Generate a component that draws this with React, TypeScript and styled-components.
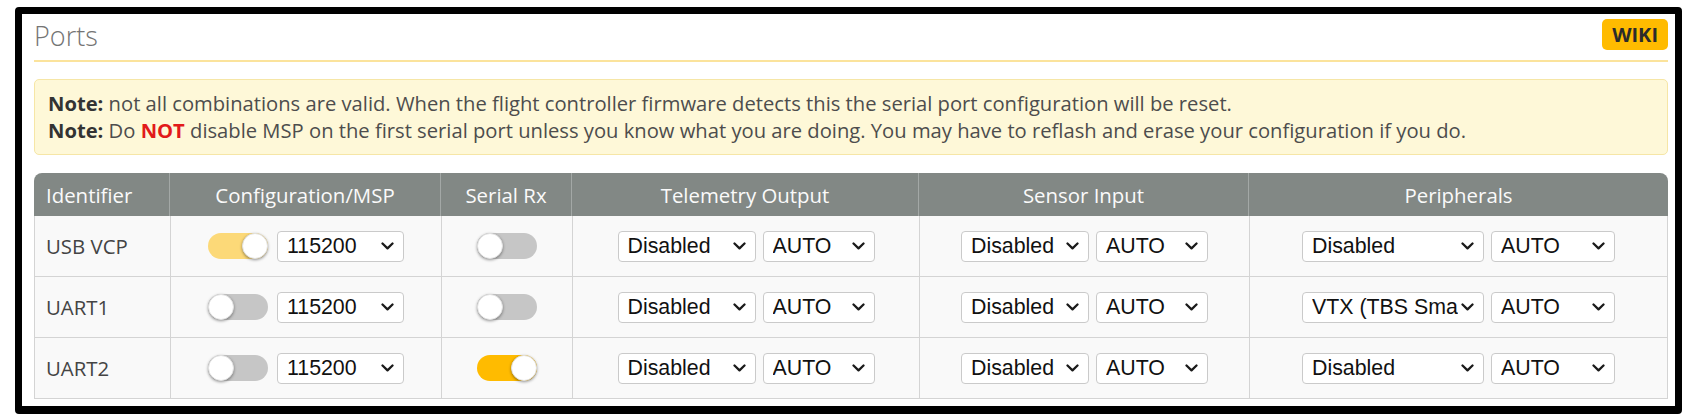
import React from 'react';
import styled, { createGlobalStyle } from 'styled-components';

type Port = {
  id: string;
  msp: boolean;
  mspMuted?: boolean;
  serialRx: boolean;
  peripheral: string;
};

const ports: Port[] = [
  { id: 'USB VCP', msp: true, mspMuted: true, serialRx: false, peripheral: 'Disabled' },
  { id: 'UART1', msp: false, serialRx: false, peripheral: 'VTX (TBS SmartAudio)' },
  { id: 'UART2', msp: false, serialRx: true, peripheral: 'Disabled' },
];

const COLS = '135px 271px 131px 347px 330px 1fr';

const GlobalStyle = createGlobalStyle`
  body {
    margin: 0;
    background: #fff;
    font-family: "Open Sans", "Liberation Sans", sans-serif;
  }
`;

const Frame = styled.div`
  margin: 7px 13px 0 15px;
  border: 7px solid #000;
  border-bottom-width: 8px;
  border-radius: 4px;
  padding: 5px 7px 7px 12px;
  background: #fff;
`;

const TitleBar = styled.div`
  display: flex;
  justify-content: space-between;
  align-items: flex-start;
  padding-bottom: 7px;
  border-bottom: 2px solid #fbe39c;
`;

const Title = styled.h1`
  margin: 0;
  font-size: 27px;
  line-height: 34px;
  font-weight: 300;
  color: #747474;
`;

const WikiButton = styled.a`
  display: flex;
  align-items: center;
  height: 31px;
  padding: 0 10px;
  border-radius: 5px;
  background: #ffbb00;
  color: #2b2b2b;
  font-size: 20px;
  font-weight: 700;
  text-decoration: none;
`;

const NoteBox = styled.div`
  margin-top: 17px;
  padding: 10px 13px;
  border: 1px solid #f6e6a6;
  border-radius: 5px;
  background: #fef8d8;
  color: #4d4d4d;
  font-size: 20.2px;
  line-height: 27px;
`;

const NoteLine = styled.p`
  margin: 0;
  white-space: nowrap;
`;

const Strong = styled.strong<{ $red?: boolean }>`
  font-weight: 700;
  color: ${(p) => (p.$red ? '#e21a1a' : '#333')};
`;

const Table = styled.div`
  margin-top: 18px;
`;

const HeadRow = styled.div`
  display: grid;
  grid-template-columns: ${COLS};
  height: 43px;
  background: #828885;
  border-radius: 8px 8px 0 0;
  color: #fafafa;
  font-size: 20.4px;
`;

const HeadCell = styled.div<{ $left?: boolean }>`
  display: flex;
  align-items: center;
  justify-content: ${(p) => (p.$left ? 'flex-start' : 'center')};
  padding-left: ${(p) => (p.$left ? '12px' : '0')};
  & + & {
    border-left: 1px solid #a3a8a6;
  }
`;

const BodyRow = styled.div`
  display: grid;
  grid-template-columns: ${COLS};
  height: 61px;
  box-sizing: border-box;
  background: #f9f9f9;
  border: 1px solid #d4d4d4;
  border-top: none;
`;

const Cell = styled.div<{ $gap?: number }>`
  display: flex;
  align-items: center;
  justify-content: center;
  gap: ${(p) => p.$gap ?? 7}px;
  & + & {
    border-left: 1px solid #d4d4d4;
  }
`;

const IdCell = styled(Cell)`
  justify-content: flex-start;
  padding-left: 11px;
  color: #444;
  font-size: 20.4px;
`;

const Toggle = styled.span<{ $on: boolean; $muted?: boolean }>`
  display: inline-flex;
  align-items: center;
  justify-content: ${(p) => (p.$on ? 'flex-end' : 'flex-start')};
  width: 60px;
  height: 26px;
  border-radius: 13px;
  background: ${(p) => (!p.$on ? '#c6c6c6' : p.$muted ? '#fcd978' : '#ffbb00')};
`;

const Knob = styled.span`
  width: 26px;
  height: 26px;
  box-sizing: border-box;
  border-radius: 50%;
  background: #fff;
  border: 1px solid #e2e2e2;
  box-shadow: 0 1px 3px rgba(0, 0, 0, 0.4);
`;

const SelectBox = styled.div<{ $w: number }>`
  display: inline-flex;
  align-items: center;
  width: ${(p) => p.$w}px;
  height: 31px;
  box-sizing: border-box;
  padding: 0 9px;
  border: 1px solid #cacaca;
  border-radius: 4px;
  background: #fff;
  color: #111;
  font-family: "Liberation Sans", Arial, sans-serif;
  font-size: 21.33px;
`;

const SelectValue = styled.span`
  flex: 1;
  min-width: 0;
  overflow: hidden;
  white-space: nowrap;
`;

const Chevron = () => (
  <svg width="13" height="8" viewBox="0 0 13 8" style={{ flex: 'none', marginLeft: 3 }}>
    <path d="M1.5 1.5 L6.5 6.3 L11.5 1.5" fill="none" stroke="#1a1a1a" strokeWidth="2.3" strokeLinecap="round" strokeLinejoin="round" />
  </svg>
);

const Select: React.FC<{ w: number; value: string }> = ({ w, value }) => (
  <SelectBox $w={w}>
    <SelectValue>{value}</SelectValue>
    <Chevron />
  </SelectBox>
);

const Switch: React.FC<{ on: boolean; muted?: boolean }> = ({ on, muted }) => (
  <Toggle $on={on} $muted={muted}>
    <Knob />
  </Toggle>
);

const App: React.FC = () => {
  return (
    <>
      <GlobalStyle />
      <Frame>
        <TitleBar>
          <Title>Ports</Title>
          <WikiButton>WIKI</WikiButton>
        </TitleBar>
        <NoteBox>
          <NoteLine>
            <Strong>Note:</Strong> not all combinations are valid. When the flight controller firmware detects this the serial port configuration will be reset.
          </NoteLine>
          <NoteLine>
            <Strong>Note:</Strong> Do <Strong $red>NOT</Strong> disable MSP on the first serial port unless you know what you are doing. You may have to reflash and erase your configuration if you do.
          </NoteLine>
        </NoteBox>
        <Table>
          <HeadRow>
            <HeadCell $left>Identifier</HeadCell>
            <HeadCell>Configuration/MSP</HeadCell>
            <HeadCell>Serial Rx</HeadCell>
            <HeadCell>Telemetry Output</HeadCell>
            <HeadCell>Sensor Input</HeadCell>
            <HeadCell>Peripherals</HeadCell>
          </HeadRow>
          {ports.map((port) => (
            <BodyRow key={port.id}>
              <IdCell>{port.id}</IdCell>
              <Cell $gap={9}>
                <Switch on={port.msp} muted={port.mspMuted} />
                <Select w={127} value="115200" />
              </Cell>
              <Cell>
                <Switch on={port.serialRx} />
              </Cell>
              <Cell>
                <Select w={138} value="Disabled" />
                <Select w={112} value="AUTO" />
              </Cell>
              <Cell>
                <Select w={128} value="Disabled" />
                <Select w={112} value="AUTO" />
              </Cell>
              <Cell>
                <Select w={182} value={port.peripheral} />
                <Select w={124} value="AUTO" />
              </Cell>
            </BodyRow>
          ))}
        </Table>
      </Frame>
    </>
  );
};

export default App;
